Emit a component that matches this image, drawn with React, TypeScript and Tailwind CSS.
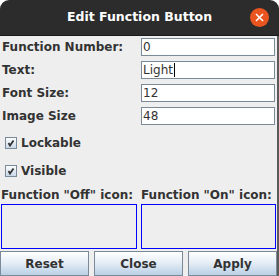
import React from "react";

const font = { fontFamily: '"DejaVu Sans", "Liberation Sans", sans-serif' };

const Field = ({ value, caret }: { value: string; caret?: boolean }) => (
  <div className="h-[18px] bg-white border border-[#7a8a99] flex items-center pl-[1px] text-[12px] text-[#333333] leading-none">
    <span>{value}</span>
    {caret && <span className="w-[1px] h-[14px] bg-black ml-[1px]" />}
  </div>
);

const Check = ({ label }: { label: string }) => (
  <div className="h-[28px] flex items-center pl-[5px] gap-[4px]">
    <svg width="12" height="12" viewBox="0 0 12 12">
      <defs>
        <linearGradient id="cb" x1="0" y1="0" x2="0" y2="1">
          <stop offset="0" stopColor="#ffffff" />
          <stop offset="1" stopColor="#c6d6e6" />
        </linearGradient>
      </defs>
      <rect x="0.5" y="0.5" width="11" height="11" fill="url(#cb)" stroke="#7a8a99" />
      <path d="M3.5 6 L5 8.5 L8.5 3.5" fill="none" stroke="#333333" strokeWidth="1.8" />
    </svg>
    <span className="text-[12px] font-bold text-[#333333]">{label}</span>
  </div>
);

const Btn = ({ label }: { label: string }) => (
  <button className="flex-1 h-[25px] border border-[#7a8a99] bg-gradient-to-b from-[#ffffff] via-[#e3ecf5] to-[#b8cfe5] text-[12px] font-bold text-[#333333]">
    {label}
  </button>
);

export default function App() {
  const rows = [
    { label: "Function Number:", value: "0" },
    { label: "Text:", value: "Light", caret: true },
    { label: "Font Size:", value: "12" },
    { label: "Image Size", value: "48" },
  ];
  return (
    <div className="w-[279px] h-[276px] bg-white overflow-hidden" style={font}>
      <div className="h-[36px] bg-[#2c2c2c] rounded-t-[9px] flex items-center justify-center relative border-b border-[#1a1a1a]">
        <span className="text-white font-bold text-[12.5px]">Edit Function Button</span>
        <div className="absolute right-[10px] top-[8px] w-[19px] h-[19px] rounded-full bg-[#e9541f] flex items-center justify-center">
          <svg width="9" height="9" viewBox="0 0 9 9">
            <path d="M1 1 L8 8 M8 1 L1 8" stroke="white" strokeWidth="1.6" />
          </svg>
        </div>
      </div>
      <div className="h-[240px] bg-[#eeeeee] border-r-2 border-[#5a5a5a] flex flex-col">
        <div className="flex flex-col gap-[5px] pt-[2px]">
          {rows.map((r) => (
            <div key={r.label} className="grid grid-cols-[141px_134px] items-center">
              <span className="pl-[2px] text-[12px] font-bold text-[#333333] leading-none">{r.label}</span>
              <Field value={r.value} caret={r.caret} />
            </div>
          ))}
        </div>
        <div className="pt-[4px]">
          <Check label="Lockable" />
          <Check label="Visible" />
        </div>
        <div className="grid grid-cols-[141px_136px] h-[19px] items-center text-[12px] font-bold text-[#333333]">
          <span className="pl-[1px]">Function "Off" icon:</span>
          <span>Function "On" icon:</span>
        </div>
        <div className="flex gap-[4px] pl-[1px] pr-[1px] h-[45px]">
          <div className="w-[136px] border border-[#0000ff]" />
          <div className="flex-1 border border-[#0000ff]" />
        </div>
        <div className="flex gap-[5px] mt-[2px]">
          <Btn label="Reset" />
          <Btn label="Close" />
          <Btn label="Apply" />
        </div>
      </div>
    </div>
  );
}
